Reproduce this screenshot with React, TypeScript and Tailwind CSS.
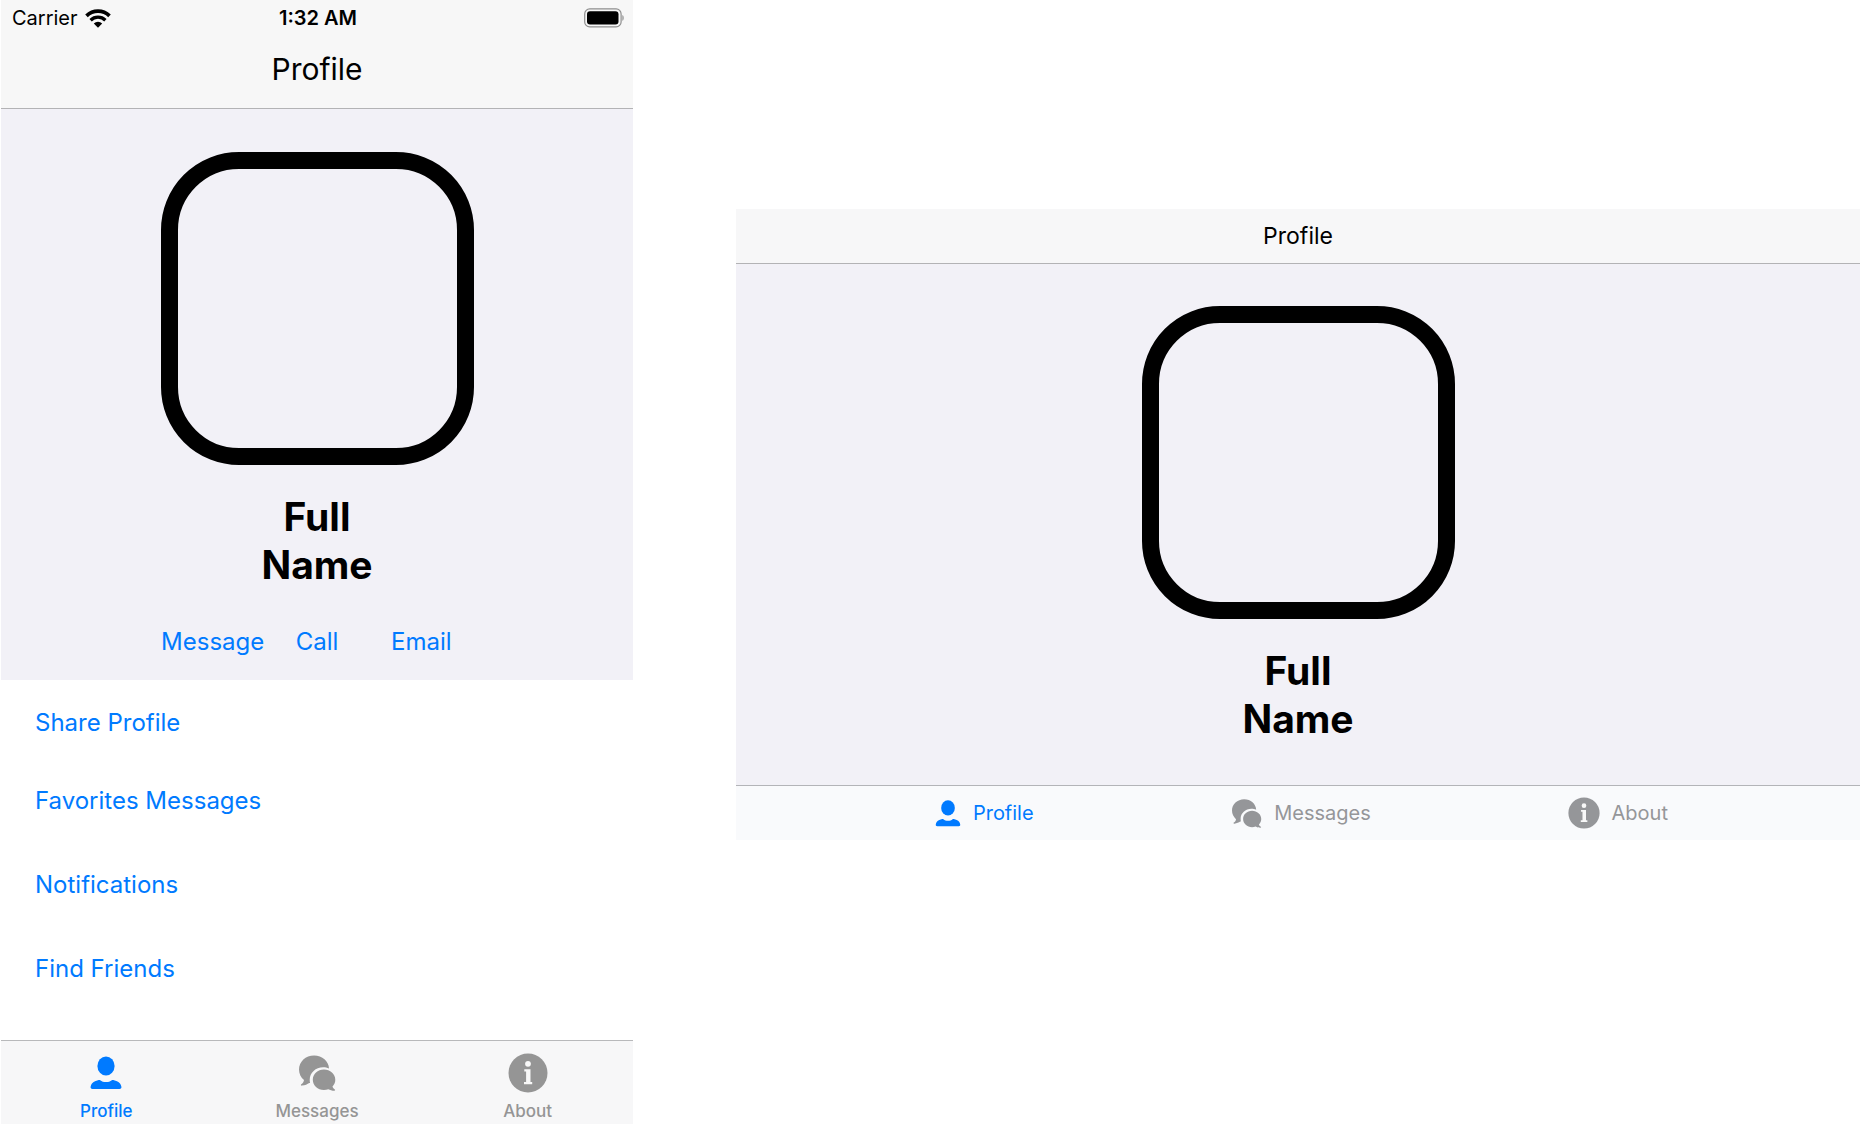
import React from "react";

const font = "font-['Inter','Liberation_Sans',sans-serif]";

function PersonIcon({ className }: { className: string }) {
  return (
    <svg viewBox="0 0 32 34" className={className} fill="currentColor" aria-hidden="true">
      <ellipse cx="16" cy="10" rx="8.6" ry="9.6" />
      <path d="M10.2 24.2c1.6 1.3 3.4 1.9 5.8 1.9s4.200-.6 5.800-1.900c.5-.3.900-.4 1.500-.2l3.700 1.200c2.600 1 4 2.800 4.400 5.600.2 1.300-.4 2.200-1.900 2.200h-27C1 33 .4 32.100.6 30.800 1 28 2.400 26.200 5 25.200L8.700 24c.6-.2 1-.1 1.500.2z" />
    </svg>
  );
}

function ChatIcon({ className }: { className: string }) {
  return (
    <svg viewBox="0 0 38 36" className={className} fill="currentColor" aria-hidden="true">
      <path d="M16.100.4C7.600.4 1 6.600 1 14.400c0 4.300 1.900 8 5 10.600-.2 2-1.200 3.300-2.700 4.300-.8.6-.4 1.500.6 1.300 3.300-.4 5.500-1.500 7.300-2.700h.9c-.3-1-.4-2.100-.4-3.200 0-7 6-12.500 13.400-12.500 2.200 0 4.100.3 5.900 1.200C30.800 6.200 24.200.4 16.100.4z" />
      <path d="M25.900 14.600c-6.200 0-11.100 4.500-11.100 10.200S19.700 35 25.900 35c1.600 0 3-.2 4.400-.8 1.700.9 3.700 1.500 6 1.500.9 0 1.100-.8.5-1.200-1.300-.8-2.100-1.700-2.300-2.900 1.700-1.900 2.800-4.200 2.800-6.800 0-5.700-5.100-10.200-11.400-10.200z" />
    </svg>
  );
}

function InfoIcon({ className }: { className: string }) {
  return (
    <svg viewBox="0 0 40 40" className={className} aria-hidden="true">
      <circle cx="20" cy="20" r="19.500" fill="currentColor" />
      <circle cx="20" cy="10.800" r="2.900" fill="#f8f8f8" />
      <path d="M16.300 16.300h6.200v12.800h1.700v2.100h-8.200v-2.100h2.100v-10.700h-1.800z" fill="#f8f8f8" />
    </svg>
  );
}

function StatusBar() {
  return (
    <div className="grid h-[30px] grid-cols-3 items-center pr-[9px] pl-[11px] text-[20px] leading-[30px] text-black">
      <div className="flex items-center gap-[7px]">
        <span>Carrier</span>
        <svg viewBox="0 0 26 19" className="h-[19px] w-[26px]" aria-label="Wi-Fi" role="img">
          <path d="M1.500 6.800a16.500 16.500 0 0 1 23 0" fill="none" stroke="#000" strokeWidth="3.700" />
          <path d="M5.600 11.200a10.600 10.600 0 0 1 14.800 0" fill="none" stroke="#000" strokeWidth="3.300" />
          <path d="M13 18.700l-4.200-4.200a6.200 6.200 0 0 1 8.400 0z" />
        </svg>
      </div>
      <span className="text-center font-semibold">1:32 AM</span>
      <svg viewBox="0 0 40 20" className="h-5 w-10 justify-self-end" aria-label="Battery full" role="img">
        <rect x=".7" y=".9" width="36.400" height="18" rx="5" fill="none" stroke="#8e8e8e" strokeWidth="1.200" />
        <rect x="3" y="3.200" width="31.500" height="13.400" rx="3" />
        <path d="M38.400 7v5.800c1.700-.6 1.700-5.200 0-5.800z" fill="#8e8e8e" />
      </svg>
    </div>
  );
}

function ProfileCard() {
  return (
    <div className="flex w-[313px] flex-col items-center">
      <div className="h-[313px] w-[313px] rounded-[78px] border-[17px] border-black" />
      <h2 className="mt-7 text-center text-[39px] font-bold leading-[48px] text-black">
        Full
        <br />
        Name
      </h2>
    </div>
  );
}

const tabs = [
  { label: "Profile", Icon: PersonIcon, active: true, tall: "h-[34px] w-8", wide: "h-[27px] w-[26px]" },
  { label: "Messages", Icon: ChatIcon, active: false, tall: "h-9 w-[38px]", wide: "h-[29px] w-[31px]" },
  { label: "About", Icon: InfoIcon, active: false, tall: "h-10 w-10", wide: "h-8 w-8" },
];

function PhoneTabs() {
  return (
    <nav className="grid h-[84px] grid-cols-3 border-t border-[#b8b9bb] bg-[#f7f7f8]">
      {tabs.map(({ label, Icon, active, tall }) => (
        <button
          key={label}
          type="button"
          className={`flex flex-col items-center pt-3 text-[17px] font-medium leading-5 ${active ? "text-[#007aff]" : "text-[#959595]"}`}
        >
          <span className="flex h-10 items-center">
            <Icon className={tall} />
          </span>
          <span className="mt-2">{label}</span>
        </button>
      ))}
    </nav>
  );
}

function WideTabs() {
  return (
    <nav className="flex h-[55px] justify-center border-t border-[#b3b4b8] bg-[#f9fafc] pl-1.5">
      <div className="grid w-[85%] grid-cols-3">
        {tabs.map(({ label, Icon, active, wide }) => (
          <button
            key={label}
            type="button"
            className={`flex items-center justify-center gap-3 text-[20px] leading-6 ${active ? "text-[#007aff]" : "text-[#959699]"}`}
          >
            <Icon className={wide} />
            <span>{label}</span>
          </button>
        ))}
      </div>
    </nav>
  );
}

export default function App() {
  return (
    <main className={`flex min-h-screen items-start overflow-hidden bg-white pl-px ${font}`}>
      <section className="w-[34%]">
        <header className="border-b border-[#b3b3b5] bg-[#f7f7f7] pt-[3px]">
          <StatusBar />
          <h1 className="pt-4 pb-[19px] text-center text-[30px] leading-10 text-black">Profile</h1>
        </header>
        <div className="flex flex-col items-center bg-[#f2f1f7] pt-[43px]">
          <ProfileCard />
          <div className="grid w-[313px] grid-cols-3 pt-[37px] pb-[22px] text-[24px] leading-8 text-[#007aff]">
            <button type="button">Message</button>
            <button type="button">Call</button>
            <button type="button">Email</button>
          </div>
        </div>
        <div className="flex flex-col items-start gap-[52px] bg-white px-[34px] pt-[27px] pb-[55px] text-[24px] leading-8 text-[#007aff]">
          <button type="button" className="-mb-1.5">Share Profile</button>
          <button type="button">Favorites Messages</button>
          <button type="button">Notifications</button>
          <button type="button">Find Friends</button>
        </div>
        <PhoneTabs />
      </section>
      <section className="mt-[209px] ml-[103px] flex-1">
        <header className="border-b border-[#b3b3b5] bg-[#f7f7f8] py-3">
          <h1 className="text-center text-[23px] leading-[30px] text-black">Profile</h1>
        </header>
        <div className="flex justify-center bg-[#f2f1f7] py-[42px]">
          <ProfileCard />
        </div>
        <WideTabs />
      </section>
    </main>
  );
}
